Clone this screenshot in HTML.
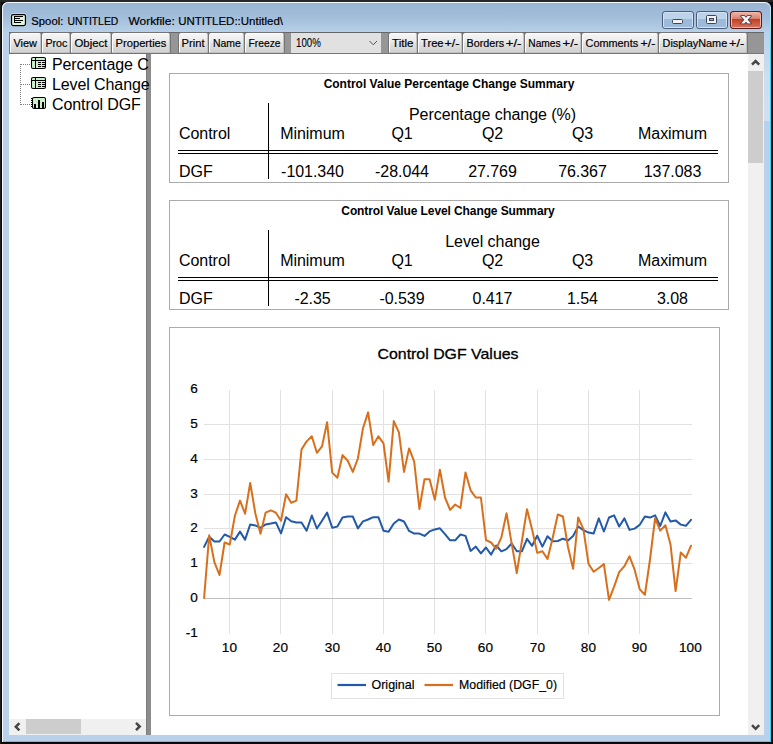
<!DOCTYPE html>
<html>
<head>
<meta charset="utf-8">
<title>Spool: UNTITLED</title>
<style>
html,body{margin:0;padding:0;}
body{width:773px;height:744px;overflow:hidden;background:#0a0a0a;font-family:"Liberation Sans",sans-serif;position:relative;}
.abs{position:absolute;}
#win{position:absolute;left:2px;top:2px;width:769px;height:740px;border-radius:6px 6px 0 0;background:#b9d1ea;overflow:hidden;}
#titlegrad{position:absolute;left:0;top:0;width:769px;height:31px;background:linear-gradient(#98b4d2 0%,#a3bedb 50%,#b9d1ea 100%);}
#cyb{position:absolute;left:0;top:739px;width:769px;height:1px;background:#35d5f5;}
#cyr{position:absolute;left:768px;top:5px;width:1px;height:735px;background:linear-gradient(#c8ecf8 0px,#35d5f5 50px);}
#hl{position:absolute;left:0;top:0;width:768px;height:760px;border:1px solid #f4f9fd;border-right:none;border-radius:6px 6px 0 0;box-sizing:border-box;}
#title{position:absolute;left:31px;top:13px;font-size:12px;line-height:14px;color:#000;white-space:pre;}
/* toolbar */
#tb{position:absolute;left:9px;top:32px;width:755px;height:22px;background:#969696;border-top:1px solid #666;border-bottom:1px solid #777;box-sizing:border-box;}
.b{position:absolute;top:32px;height:22px;box-sizing:border-box;border:1px solid #747474;border-radius:3px 3px 2px 2px;background:linear-gradient(#f6f6f6 0%,#ececec 40%,#dedede 60%,#d0d0d0 100%);box-shadow:inset 1px 1px 0 #fdfdfd,inset -1px -1px 0 #c2c2c2;}
.bt{display:inline-block;font-size:12px;line-height:18px;}
#combo{position:absolute;left:291px;top:33px;width:90px;height:20px;background:#e1e1e1;}
#combot{position:absolute;left:296px;top:35px;font-size:12px;line-height:16px;color:#000;}
/* panes */
#left{position:absolute;left:9px;top:54px;width:137px;height:665px;background:#fff;overflow:hidden;}
#split{position:absolute;left:146px;top:54px;width:5px;height:681px;background:#8c8c8c;border-left:1px solid #7c7c7c;box-sizing:border-box;}
#right{position:absolute;left:151px;top:54px;width:597px;height:681px;background:#fff;overflow:hidden;}
#vsb{position:absolute;left:748px;top:54px;width:16px;height:681px;background:#f0f0f0;}
#vthumb{position:absolute;left:748px;top:71px;width:15px;height:92px;background:#cdcdcd;}
#hsb{position:absolute;left:9px;top:719px;width:137px;height:16px;background:#f0f0f0;}
#hthumb{position:absolute;left:26px;top:719px;width:55px;height:15px;background:#cdcdcd;}
.ti{position:absolute;left:52px;font-size:16px;line-height:20px;letter-spacing:-0.1px;color:#000;white-space:nowrap;}
.box{position:absolute;border:1px solid #ababab;box-sizing:border-box;background:#fff;}
.tt{position:absolute;font-weight:bold;font-size:12px;line-height:14px;color:#000;white-space:nowrap;text-align:center;}
.c{position:absolute;font-size:16px;line-height:18px;letter-spacing:-0.05px;color:#000;white-space:nowrap;}
.cc{position:absolute;font-size:16px;line-height:18px;letter-spacing:-0.05px;color:#000;white-space:nowrap;text-align:center;width:100px;}
svg{position:absolute;left:0;top:0;}
.bl{font-family:"Liberation Sans",sans-serif;font-size:11.7px;fill:#000;stroke:#000;stroke-width:0.2px;}
.ax{font-family:"Liberation Sans",sans-serif;font-size:13.6px;fill:#000;stroke:#000;stroke-width:0.2px;}
</style>
</head>
<body>
<div class="abs" style="left:0;top:0;width:773px;height:2px;background:#262626;"></div>
<div id="win">
  <div id="titlegrad"></div>
  <div id="cyb"></div>
  <div id="cyr"></div>
  <div id="hl"></div>
</div>

<div class="abs" style="left:764px;top:32px;width:6px;height:89px;background:linear-gradient(rgba(255,255,255,0) 0%,rgba(255,255,255,0.28) 50%,rgba(255,255,255,0.32) 100%);"></div>
<div class="abs" style="left:0;top:2px;width:1px;height:742px;background:#1c1c1c;"></div>
<div id="tb"></div>
<div class="b" style="left:9px;width:33px;"></div>
<div class="b" style="left:41px;width:30px;"></div>
<div class="b" style="left:70px;width:42px;"></div>
<div class="b" style="left:111px;width:60px;"></div>
<div class="b" style="left:178px;width:31px;"></div>
<div class="b" style="left:208px;width:37px;"></div>
<div class="b" style="left:244px;width:41px;"></div>
<div class="b" style="left:388px;width:30px;"></div>
<div class="b" style="left:417px;width:46px;"></div>
<div class="b" style="left:462px;width:63px;"></div>
<div class="b" style="left:524px;width:58px;"></div>
<div class="b" style="left:581px;width:78px;"></div>
<div class="b" style="left:658px;width:90px;"></div>
<div id="combo"></div>

<div id="left"></div>
<div id="split"></div>
<div id="right"></div>
<div id="vsb"></div>
<div id="vthumb"></div>
<div id="hsb"></div>
<div id="hthumb"></div>

<div class="ti" style="top:55px;">Percentage C</div>
<div class="ti" style="top:75px;">Level Change</div>
<div class="ti" style="top:95px;">Control DGF</div>

<div class="box" style="left:169px;top:73px;width:560px;height:110px;"></div>
<div class="tt" style="left:169px;width:560px;top:77px;letter-spacing:0;">Control Value Percentage Change Summary</div>
<div class="cc" style="left:342.5px;width:300px;top:106px;">Percentage change (%)</div>
<div class="c" style="left:179px;top:125px;">Control</div>
<div class="c" style="left:179px;top:163px;">DGF</div>
<div class="cc" style="left:262.5px;top:125px;">Minimum</div>
<div class="cc" style="left:262.5px;top:163px;">-101.340</div>
<div class="cc" style="left:352px;top:125px;">Q1</div>
<div class="cc" style="left:352px;top:163px;">-28.044</div>
<div class="cc" style="left:442.5px;top:125px;">Q2</div>
<div class="cc" style="left:442.5px;top:163px;">27.769</div>
<div class="cc" style="left:532.5px;top:125px;">Q3</div>
<div class="cc" style="left:532.5px;top:163px;">76.367</div>
<div class="cc" style="left:622.5px;top:125px;">Maximum</div>
<div class="cc" style="left:622.5px;top:163px;">137.083</div>
<div class="abs" style="left:268px;top:103px;width:1px;height:76px;background:#000;"></div>
<div class="abs" style="left:178px;top:150px;width:540px;height:1px;background:#000;"></div>
<div class="abs" style="left:178px;top:153px;width:540px;height:1px;background:#000;"></div>
<div class="box" style="left:169px;top:200px;width:560px;height:110px;"></div>
<div class="tt" style="left:168px;width:560px;top:204px;letter-spacing:-0.1px;">Control Value Level Change Summary</div>
<div class="cc" style="left:342.5px;width:300px;top:233px;">Level change</div>
<div class="c" style="left:179px;top:252px;">Control</div>
<div class="c" style="left:179px;top:290px;">DGF</div>
<div class="cc" style="left:262.5px;top:252px;">Minimum</div>
<div class="cc" style="left:262.5px;top:290px;">-2.35</div>
<div class="cc" style="left:352px;top:252px;">Q1</div>
<div class="cc" style="left:352px;top:290px;">-0.539</div>
<div class="cc" style="left:442.5px;top:252px;">Q2</div>
<div class="cc" style="left:442.5px;top:290px;">0.417</div>
<div class="cc" style="left:532.5px;top:252px;">Q3</div>
<div class="cc" style="left:532.5px;top:290px;">1.54</div>
<div class="cc" style="left:622.5px;top:252px;">Maximum</div>
<div class="cc" style="left:622.5px;top:290px;">3.08</div>
<div class="abs" style="left:268px;top:230px;width:1px;height:76px;background:#000;"></div>
<div class="abs" style="left:178px;top:277px;width:540px;height:1px;background:#000;"></div>
<div class="abs" style="left:178px;top:280px;width:540px;height:1px;background:#000;"></div>
<div class="box" style="left:169px;top:327px;width:551px;height:389px;"></div>

<svg width="773" height="744" viewBox="0 0 773 744">
<defs>
<linearGradient id="cg1" x1="0" y1="0" x2="0" y2="1"><stop offset="0" stop-color="#ecb0a2"/><stop offset="1" stop-color="#d67f6c"/></linearGradient>
<linearGradient id="cg2" x1="0" y1="0" x2="0" y2="1"><stop offset="0" stop-color="#c13c1f"/><stop offset="1" stop-color="#d4705a"/></linearGradient>
</defs>
<!-- title + toolbar text -->
<text x="31.3" y="24.8" class="bl" textLength="32" lengthAdjust="spacingAndGlyphs">Spool:</text>
<text x="67.6" y="24.8" class="bl" textLength="50.7" lengthAdjust="spacingAndGlyphs">UNTITLED</text>
<text x="128.5" y="24.8" class="bl" textLength="46.2" lengthAdjust="spacingAndGlyphs">Workfile:</text>
<text x="178.2" y="24.8" class="bl" textLength="104.8" lengthAdjust="spacingAndGlyphs">UNTITLED::Untitled\</text>
<text x="13.5" y="46.6" class="bl" textLength="23.5" lengthAdjust="spacingAndGlyphs">View</text>
<text x="45.4" y="46.6" class="bl" textLength="21.9" lengthAdjust="spacingAndGlyphs">Proc</text>
<text x="74.5" y="46.6" class="bl" textLength="32.8" lengthAdjust="spacingAndGlyphs">Object</text>
<text x="115.6" y="46.6" class="bl" textLength="50.8" lengthAdjust="spacingAndGlyphs">Properties</text>
<text x="181.6" y="46.6" class="bl" textLength="23.0" lengthAdjust="spacingAndGlyphs">Print</text>
<text x="213" y="46.6" class="bl" textLength="27.9" lengthAdjust="spacingAndGlyphs">Name</text>
<text x="248.5" y="46.6" class="bl" textLength="32.0" lengthAdjust="spacingAndGlyphs">Freeze</text>
<text x="392.1" y="46.6" class="bl" textLength="21.4" lengthAdjust="spacingAndGlyphs">Title</text>
<text x="421.0" y="46.6" class="bl" textLength="22.6" lengthAdjust="spacingAndGlyphs">Tree</text><text x="444.5" y="46.6" class="bl" textLength="15.0" lengthAdjust="spacingAndGlyphs">+/-</text>
<text x="466.5" y="46.6" class="bl" textLength="37.6" lengthAdjust="spacingAndGlyphs">Borders</text><text x="505.8" y="46.6" class="bl" textLength="15.7" lengthAdjust="spacingAndGlyphs">+/-</text>
<text x="528.3" y="46.6" class="bl" textLength="32.3" lengthAdjust="spacingAndGlyphs">Names</text><text x="562.6" y="46.6" class="bl" textLength="15.6" lengthAdjust="spacingAndGlyphs">+/-</text>
<text x="585.6" y="46.6" class="bl" textLength="52.5" lengthAdjust="spacingAndGlyphs">Comments</text><text x="640.6" y="46.6" class="bl" textLength="14.7" lengthAdjust="spacingAndGlyphs">+/-</text>
<text x="662.6" y="46.6" class="bl" textLength="64.6" lengthAdjust="spacingAndGlyphs">DisplayName</text><text x="729.1" y="46.6" class="bl" textLength="15.2" lengthAdjust="spacingAndGlyphs">+/-</text>
<text x="296" y="46.8" class="bl" style="font-size:12.3px;stroke-width:0.1px" textLength="24.8" lengthAdjust="spacingAndGlyphs">100%</text>
<!-- chart -->
<g shape-rendering="crispEdges">
<line x1="204" y1="563.5" x2="692" y2="563.5" stroke="#e2e2e2" stroke-width="1"/>
<line x1="204" y1="528.5" x2="692" y2="528.5" stroke="#e2e2e2" stroke-width="1"/>
<line x1="204" y1="494.5" x2="692" y2="494.5" stroke="#e2e2e2" stroke-width="1"/>
<line x1="204" y1="459.5" x2="692" y2="459.5" stroke="#e2e2e2" stroke-width="1"/>
<line x1="204" y1="424.5" x2="692" y2="424.5" stroke="#e2e2e2" stroke-width="1"/>
<line x1="229.5" y1="390" x2="229.5" y2="633.5" stroke="#e2e2e2" stroke-width="1"/>
<line x1="280.5" y1="390" x2="280.5" y2="633.5" stroke="#e2e2e2" stroke-width="1"/>
<line x1="332.5" y1="390" x2="332.5" y2="633.5" stroke="#e2e2e2" stroke-width="1"/>
<line x1="383.5" y1="390" x2="383.5" y2="633.5" stroke="#e2e2e2" stroke-width="1"/>
<line x1="434.5" y1="390" x2="434.5" y2="633.5" stroke="#e2e2e2" stroke-width="1"/>
<line x1="485.5" y1="390" x2="485.5" y2="633.5" stroke="#e2e2e2" stroke-width="1"/>
<line x1="537.5" y1="390" x2="537.5" y2="633.5" stroke="#e2e2e2" stroke-width="1"/>
<line x1="588.5" y1="390" x2="588.5" y2="633.5" stroke="#e2e2e2" stroke-width="1"/>
<line x1="639.5" y1="390" x2="639.5" y2="633.5" stroke="#e2e2e2" stroke-width="1"/>
<line x1="204" y1="598.5" x2="692" y2="598.5" stroke="#bfbfbf" stroke-width="1"/>
<text x="197.9" y="636.6" text-anchor="end" class="ax">-1</text>
<text x="197.9" y="601.6" text-anchor="end" class="ax">0</text>
<text x="197.9" y="566.6" text-anchor="end" class="ax">1</text>
<text x="197.9" y="531.6" text-anchor="end" class="ax">2</text>
<text x="197.9" y="497.6" text-anchor="end" class="ax">3</text>
<text x="197.9" y="462.6" text-anchor="end" class="ax">4</text>
<text x="197.9" y="427.6" text-anchor="end" class="ax">5</text>
<text x="197.9" y="392.6" text-anchor="end" class="ax">6</text>
<text x="229.4" y="652.2" text-anchor="middle" class="ax">10</text>
<text x="280.4" y="652.2" text-anchor="middle" class="ax">20</text>
<text x="332.4" y="652.2" text-anchor="middle" class="ax">30</text>
<text x="383.4" y="652.2" text-anchor="middle" class="ax">40</text>
<text x="434.4" y="652.2" text-anchor="middle" class="ax">50</text>
<text x="485.4" y="652.2" text-anchor="middle" class="ax">60</text>
<text x="537.4" y="652.2" text-anchor="middle" class="ax">70</text>
<text x="588.4" y="652.2" text-anchor="middle" class="ax">80</text>
<text x="639.4" y="652.2" text-anchor="middle" class="ax">90</text>
<text x="690.4" y="652.2" text-anchor="middle" class="ax">100</text>
</g>
<text x="448" y="359" text-anchor="middle" style="font-family:'Liberation Sans',sans-serif;font-size:15px;fill:#000;stroke:#000;stroke-width:0.3px;" textLength="141" lengthAdjust="spacingAndGlyphs">Control DGF Values</text>
<polyline fill="none" stroke="#2259a8" stroke-width="2" stroke-linejoin="round" stroke-linecap="round" points="204.1,546.9 209.2,536.8 214.4,541.5 219.5,541.5 224.6,534.5 229.8,536.8 234.9,539.6 240.0,531.6 245.1,539.6 250.2,524.5 255.4,525.4 260.5,527.8 265.6,524.4 270.8,523.5 275.9,522.4 281.0,533.4 286.1,517.3 291.2,521.2 296.4,522.5 301.5,522.5 306.6,530.7 311.8,515.5 316.9,528.5 322.0,520.7 327.1,512.6 332.2,527.8 337.4,526.6 342.5,517.4 347.6,516.5 352.8,516.5 357.9,528.4 363.0,521.4 368.1,519.5 373.2,517.2 378.4,517.2 383.5,530.7 388.6,531.8 393.8,523.5 398.9,519.5 404.0,521.5 409.1,530.9 414.2,533.6 419.4,533.6 424.5,535.9 429.6,531.4 434.8,529.4 439.9,528.3 445.0,534.2 450.1,540.3 455.2,540.3 460.4,534.5 465.5,535.9 470.6,550.9 475.8,546.6 480.9,553.4 486.0,547.5 491.1,554.6 496.2,545.5 501.4,551.3 506.5,549.2 511.6,543.5 516.8,551.3 521.9,551.3 527.0,538.8 532.1,545.8 537.2,535.7 542.4,546.6 547.5,536.3 552.6,541.2 557.8,541.0 562.9,538.7 568.0,540.5 573.1,535.9 578.2,526.5 583.4,530.1 588.5,532.6 593.6,533.6 598.8,518.4 603.9,531.5 609.0,517.5 614.1,515.3 619.2,526.5 624.4,518.4 629.5,529.9 634.6,528.6 639.8,524.7 644.9,516.5 650.0,517.6 655.1,515.4 660.2,526.0 665.4,512.4 670.5,521.5 675.6,520.4 680.8,524.6 685.9,525.8 691.0,519.8"/>
<polyline fill="none" stroke="#d86f1c" stroke-width="2" stroke-linejoin="round" stroke-linecap="round" points="204.1,598.0 209.2,535.2 214.4,562.2 219.5,575.0 224.6,542.5 229.8,544.5 234.9,515.7 240.0,500.6 245.1,513.7 250.2,483.0 255.4,513.7 260.5,533.8 265.6,512.7 270.8,510.3 275.9,512.7 281.0,520.8 286.1,494.2 291.2,502.7 296.4,500.6 301.5,449.5 306.6,441.4 311.8,436.3 316.9,452.8 322.0,446.4 327.1,422.2 332.2,472.6 337.4,477.7 342.5,455.1 347.6,460.5 352.8,471.9 357.9,458.5 363.0,428.2 368.1,412.4 373.2,445.0 378.4,436.3 383.5,443.4 388.6,481.6 393.8,421.1 398.9,432.3 404.0,471.9 409.1,448.4 414.2,461.6 419.4,509.0 424.5,479.2 429.6,479.2 434.8,499.8 439.9,469.7 445.0,497.5 450.1,509.9 455.2,504.5 460.4,508.0 465.5,472.4 470.6,490.3 475.8,497.5 480.9,497.6 486.0,540.1 491.1,542.5 496.2,548.8 501.4,537.4 506.5,513.2 511.6,543.1 516.8,573.0 521.9,541.2 527.0,509.2 532.1,529.4 537.2,552.9 542.4,551.3 547.5,558.9 552.6,538.3 557.8,514.5 562.9,516.5 568.0,547.0 573.1,568.8 578.2,517.4 583.4,529.2 588.5,563.7 593.6,571.8 598.8,568.0 603.9,564.1 609.0,599.8 614.1,586.7 619.2,572.2 624.4,566.2 629.5,556.3 634.6,569.7 639.8,589.4 644.9,594.8 650.0,559.5 655.1,518.2 660.2,530.6 665.4,525.3 670.5,544.4 675.6,591.1 680.8,552.4 685.9,557.8 691.0,545.7"/>
<!-- legend -->
<rect x="331.5" y="673.5" width="232" height="25" fill="#fff" stroke="#e2e2e2" stroke-width="1" shape-rendering="crispEdges"/>
<line x1="337.5" y1="685" x2="366" y2="685" stroke="#2259a8" stroke-width="2.2"/>
<line x1="424.5" y1="685" x2="453" y2="685" stroke="#d86f1c" stroke-width="2.2"/>
<text x="371.5" y="689.3" class="ax" textLength="43" lengthAdjust="spacingAndGlyphs">Original</text>
<text x="459" y="689.3" class="ax" textLength="98" lengthAdjust="spacingAndGlyphs">Modified (DGF_0)</text>

<!-- tree connectors -->
<g stroke="#808080" stroke-width="1" stroke-dasharray="1,1" shape-rendering="crispEdges">
<line x1="20.5" y1="64" x2="20.5" y2="105"/>
<line x1="21" y1="64.5" x2="31" y2="64.5"/>
<line x1="21" y1="84.5" x2="31" y2="84.5"/>
<line x1="21" y1="104.5" x2="31" y2="104.5"/>
</g>
<!-- table icons -->
<g id="ticon1">
<rect x="31.5" y="57.5" width="14" height="11" rx="1.6" fill="#ccf0cc" stroke="#000" stroke-width="1.05"/>
<path d="M35.5 58v11M32 60.5h13.5M37.5 62.5h3M41.5 62.5h3M37.5 64.5h3M41.5 64.5h3M37.5 66.5h3M41.5 66.5h3" stroke="#000" stroke-width="1" fill="none" shape-rendering="crispEdges"/>
</g>
<g id="ticon2" transform="translate(0,20)">
<rect x="31.5" y="57.5" width="14" height="11" rx="1.6" fill="#ccf0cc" stroke="#000" stroke-width="1.05"/>
<path d="M35.5 58v11M32 60.5h13.5M37.5 62.5h3M41.5 62.5h3M37.5 64.5h3M41.5 64.5h3M37.5 66.5h3M41.5 66.5h3" stroke="#000" stroke-width="1" fill="none" shape-rendering="crispEdges"/>
</g>
<!-- graph icon -->
<g id="gicon">
<rect x="32.5" y="97.5" width="13" height="11" rx="1.6" fill="#ccf0cc" stroke="#000" stroke-width="1.05"/>
<path d="M34 104h2v4h-2zM38 100h2v8h-2zM42 102h2v6h-2z" fill="#000" shape-rendering="crispEdges"/>
<path d="M31 98.5h1.5M31 100.5h1.5M31 102.5h1.5M31 104.5h1.5M31 106.5h1.5" stroke="#000" stroke-width="1" shape-rendering="crispEdges"/>
</g>
<!-- title icon -->
<rect x="10.5" y="13.5" width="16" height="13" rx="2.5" fill="none" stroke="#c4dbf2" stroke-width="1" opacity="0.8"/>
<rect x="11.5" y="14.5" width="14" height="11" rx="1.8" fill="#dff5dc" stroke="#000" stroke-width="1.25"/>
<path d="M14 16.5h9M14 18.5h6M14 20.5h9M14 22.5h7M14.5 16v7" stroke="#000" stroke-width="1" fill="none" shape-rendering="crispEdges"/>

<!-- scrollbar chevrons -->
<path d="M19.4 723.2l-3.6 3.6l3.6 3.6" fill="none" stroke="#454545" stroke-width="2.5"/>
<path d="M136 722.9l3.7 3.6l-3.7 3.6" fill="none" stroke="#454545" stroke-width="2.5"/>
<path d="M752 64.6l3.6-3.6l3.6 3.6" fill="none" stroke="#454545" stroke-width="2.5"/>
<path d="M752 725.2l3.6 3.6l3.6-3.6" fill="none" stroke="#454545" stroke-width="2.5"/>
<!-- combo chevron -->
<path d="M369.5 41l3.75 3.75l3.75-3.75" fill="none" stroke="#505050" stroke-width="1"/>

<!-- caption buttons -->
<g>
<rect x="662.5" y="11.5" width="31" height="17" rx="2.5" fill="#a9c3e0" stroke="#4b5d7a"/>
<rect x="663.5" y="12.5" width="29" height="15" rx="2" fill="none" stroke="#d3e3f3"/>
<rect x="664" y="13" width="28" height="6" fill="#bdd3ea"/>
<rect x="664" y="19" width="28" height="8" fill="#9ebadb"/>
<rect x="672.5" y="19.5" width="10" height="4" rx="1" fill="#f2f2f2" stroke="#3d4559"/>
</g>
<g>
<rect x="696.5" y="11.5" width="31" height="17" rx="2.5" fill="#a9c3e0" stroke="#4b5d7a"/>
<rect x="697.5" y="12.5" width="29" height="15" rx="2" fill="none" stroke="#d3e3f3"/>
<rect x="698" y="13" width="28" height="6" fill="#bdd3ea"/>
<rect x="698" y="19" width="28" height="8" fill="#9ebadb"/>
<rect x="706.5" y="15.5" width="10" height="8" rx="1" fill="#f2f2f2" stroke="#3d4559"/>
<rect x="709.5" y="18.5" width="4" height="2" fill="#8fb0d6" stroke="#3d4559"/>
</g>
<g>
<rect x="730.5" y="11.5" width="31" height="17" rx="2.5" fill="#c84630" stroke="#5a1c1c"/>
<rect x="731.5" y="12.5" width="29" height="15" rx="2" fill="none" stroke="#f0b8a8"/>
<rect x="732" y="13" width="28" height="6" fill="url(#cg1)"/>
<rect x="732" y="19" width="28" height="8" fill="url(#cg2)"/>
<path d="M741 16h3.4l6.6 7.5h-3.4zM747.6 16h3.4l-6.6 7.5h-3.4z" fill="#f4f4f4" stroke="#46323c" stroke-width="1.6" stroke-linejoin="round"/>
<path d="M741 16h3.4l6.6 7.5h-3.4zM747.6 16h3.4l-6.6 7.5h-3.4z" fill="#f6f6f6"/>
</g>
</svg>
</body>
</html>
